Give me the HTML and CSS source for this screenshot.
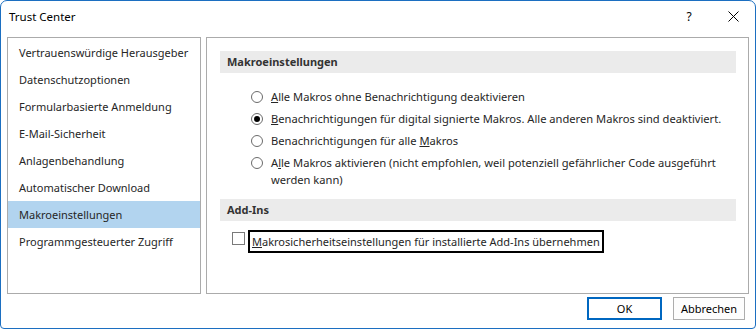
FILE: index.html
```html
<!DOCTYPE html>
<html>
<head>
  <meta charset="UTF-8">
  <title>Trust Center</title>
  <link rel="stylesheet" href="styles.css">
</head>
<body>
  <div class="window">
    <div class="titlebar">
      <span class="title">Trust Center</span>
      <span class="help">?</span>
      <span class="close">
        <svg width="11" height="11" viewBox="0 0 11 11"><path d="M0.5 0.5 L10.5 10.5 M10.5 0.5 L0.5 10.5" stroke="#000" stroke-width="1"/></svg>
      </span>
    </div>

    <div class="content">
      <ul class="nav">
        <li>Vertrauenswürdige Herausgeber</li>
        <li>Datenschutzoptionen</li>
        <li>Formularbasierte Anmeldung</li>
        <li>E-Mail-Sicherheit</li>
        <li>Anlagenbehandlung</li>
        <li>Automatischer Download</li>
        <li class="active">Makroeinstellungen</li>
        <li>Programmgesteuerter Zugriff</li>
      </ul>

      <div class="pane">
        <div class="section-head">Makroeinstellungen</div>
        <div class="options">
          <div class="option"><span class="radio"></span><span><u>A</u>lle Makros ohne Benachrichtigung deaktivieren</span></div>
          <div class="option"><span class="radio checked"></span><span><u>B</u>enachrichtigungen für digital signierte Makros. Alle anderen Makros sind deaktiviert.</span></div>
          <div class="option"><span class="radio"></span><span>Benachrichtigungen für alle <u>M</u>akros</span></div>
          <div class="option"><span class="radio"></span><span>A<u>l</u>le Makros aktivieren (nicht empfohlen, weil potenziell gefährlicher Code ausgeführt werden kann)</span></div>
        </div>
        <div class="section-head">Add-Ins</div>
        <div class="check-row">
          <span class="checkbox"></span>
          <span class="focus"><u>M</u>akrosicherheitseinstellungen für installierte Add-Ins übernehmen</span>
        </div>
      </div>
    </div>

    <div class="footer">
      <button class="btn default">OK</button>
      <button class="btn">Abbrechen</button>
    </div>
  </div>
</body>
</html>
```

FILE: styles.css
```css
html, body {
  margin: 0;
  padding: 0;
  background: #fff;
}
body {
  font-family: "Noto Sans", "DejaVu Sans", sans-serif;
  font-size: 11px;
  color: #1e1e1e;
}
.window {
  box-sizing: border-box;
  width: 756px;
  height: 329px;
  border: 1px solid #1c6fc1;
  border-radius: 7px 7px 4px 4px;
  background: #fff;
  display: flex;
  flex-direction: column;
  overflow: hidden;
}
.titlebar {
  height: 30px;
  display: flex;
  align-items: center;
  padding: 0 0 0 8px;
  flex: none;
}
.title {
  flex: 1;
  color: #000;
  font-size: 11.5px;
}
.help {
  width: 20px;
  text-align: center;
  margin-right: 29px;
  color: #000;
  font-size: 12px;
}
.close {
  width: 11px;
  margin-right: 16px;
  display: flex;
}
.content {
  display: flex;
  gap: 5px;
  margin: 6px 0 0 6px;
  height: 257px;
  flex: none;
}
.nav {
  list-style: none;
  margin: 0;
  padding: 1px 0 0;
  box-sizing: border-box;
  width: 194px;
  border: 1px solid #ababab;
}
.nav li {
  height: 27px;
  line-height: 28px;
  padding-left: 11px;
  white-space: nowrap;
  color: #262626;
}
.nav li.active {
  background: #b2d4ef;
}
.pane {
  box-sizing: border-box;
  width: 543px;
  border: 1px solid #ababab;
  padding: 13px 12px 0 13px;
}
.section-head {
  height: 22px;
  line-height: 22px;
  background: #ebebeb;
  padding-left: 7px;
  font-weight: bold;
  color: #333;
}
.options {
  padding: 15px 0 6px 31px;
}
.option {
  display: flex;
  align-items: flex-start;
  line-height: 17px;
  margin-bottom: 5px;
  color: #262626;
}
.option > span:last-child {
  max-width: 462px;
  font-size: 11.15px;
}
.radio {
  flex: none;
  box-sizing: border-box;
  width: 12px;
  height: 12px;
  margin: 3px 8px 0 0;
  border: 1px solid #6b6b6b;
  border-radius: 50%;
  display: flex;
  align-items: center;
  justify-content: center;
}
.radio.checked::after {
  content: "";
  width: 6px;
  height: 6px;
  border-radius: 50%;
  background: #000;
}
.check-row {
  display: flex;
  align-items: flex-start;
  margin: 9px 0 0 12px;
  color: #262626;
}
.checkbox {
  box-sizing: border-box;
  width: 13px;
  height: 13px;
  border: 1px solid #7a7a7a;
  margin: 2px 3px 0 0;
}
.focus {
  border: 2px solid #000;
  padding: 0 2px 0 2px;
  height: 19px;
  line-height: 19px;
  white-space: nowrap;
}
.footer {
  display: flex;
  justify-content: flex-end;
  gap: 11px;
  padding: 3px 10px 0 0;
}
.btn {
  font-family: inherit;
  font-size: 11px;
  color: #000;
  height: 23px;
  width: 72px;
  background: #fdfdfd;
  border: 1px solid #adadad;
  padding: 0;
}
.btn.default {
  width: 75px;
  border: 2px solid #0067c0;
  background: #fff;
}
```
